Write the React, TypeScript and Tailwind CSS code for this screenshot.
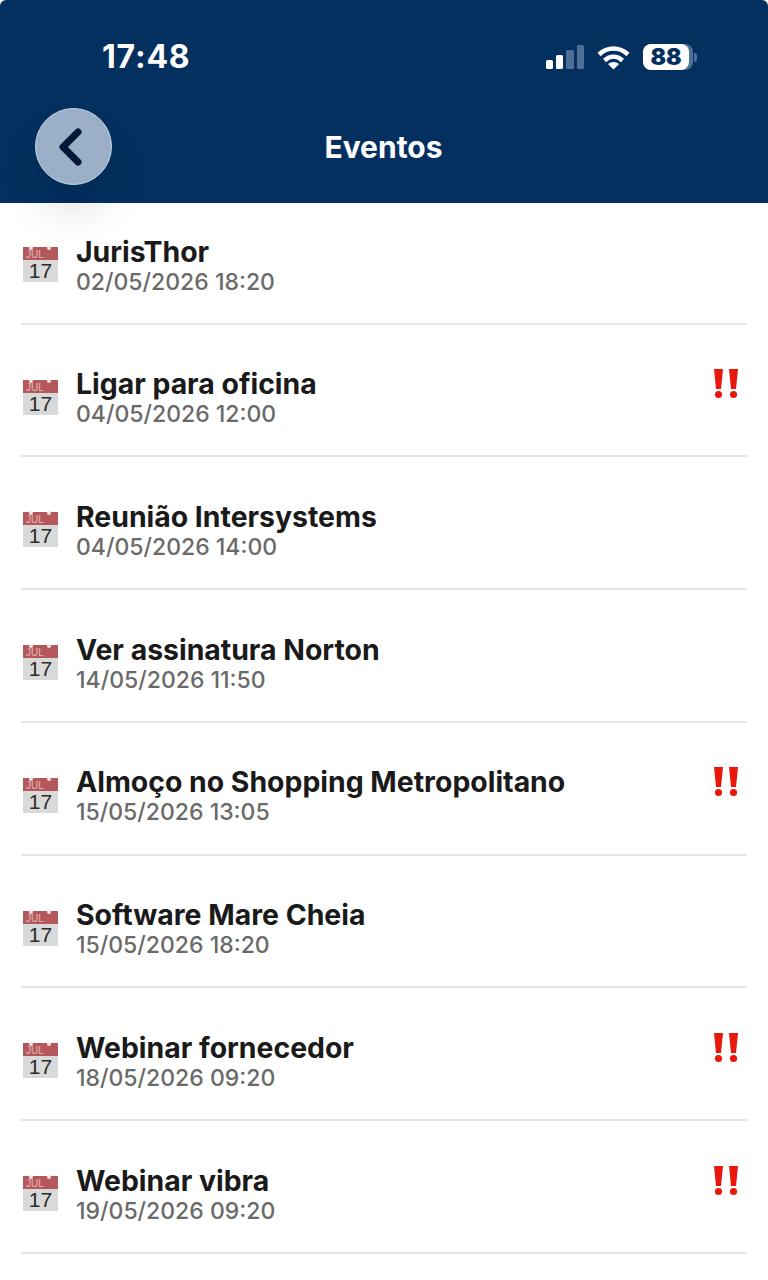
import React from "react"

const events = [
  { title: "JurisThor", date: "02/05/2026 18:20", urgent: false },
  { title: "Ligar para oficina", date: "04/05/2026 12:00", urgent: true },
  { title: "Reunião Intersystems", date: "04/05/2026 14:00", urgent: false },
  { title: "Ver assinatura Norton", date: "14/05/2026 11:50", urgent: false },
  { title: "Almoço no Shopping Metropolitano", date: "15/05/2026 13:05", urgent: true },
  { title: "Software Mare Cheia", date: "15/05/2026 18:20", urgent: false },
  { title: "Webinar fornecedor", date: "18/05/2026 09:20", urgent: true },
  { title: "Webinar vibra", date: "19/05/2026 09:20", urgent: true },
]

const CalendarIcon = () => (
  <div className="relative w-[35px] h-[35px] shrink-0 flex flex-col font-['Liberation_Sans',sans-serif]">
    <div className="h-[13px] bg-[#b4585c] text-[#e3b9ba] text-[10px] leading-[16px] pl-[3px] overflow-hidden">JUL</div>
    <div className="flex-1 bg-[#d9d9d9] text-[#2b2b2b] text-[21px] leading-[22px] text-center">17</div>
    <span className="absolute left-[6px] -top-[1px] w-[4px] h-[4px] rounded-full bg-[#f3e4e4]"></span>
    <span className="absolute right-[7px] -top-[1px] w-[4px] h-[4px] rounded-full bg-[#f3e4e4]"></span>
  </div>
)

const UrgentIcon = () => (
  <svg width="26" height="30" viewBox="0 0 26 30" className="shrink-0 mt-[1px]" fill="#e8190c">
    <path d="M1 0h9l-2 20H3z" />
    <circle cx="5.500" cy="25.500" r="3.600" />
    <path d="M16 0h9l-2 20h-5z" />
    <circle cx="20.500" cy="25.500" r="3.600" />
  </svg>
)

const StatusIcons = () => (
  <div className="flex items-center gap-[13px]">
    <svg width="38" height="24" viewBox="0 0 38 24">
      <rect x="0" y="15" width="7" height="9" rx="1.500" fill="#fff" />
      <rect x="10" y="10" width="7" height="14" rx="1.500" fill="#fff" />
      <rect x="20" y="5" width="8" height="19" rx="1.500" fill="#4f7096" />
      <rect x="31" y="0" width="7" height="24" rx="1.500" fill="#4f7096" />
    </svg>
    <svg width="33" height="25" viewBox="0 0 33 25" fill="none" stroke="#fff" strokeWidth="4.500">
      <path d="M2 9.500C10.500 1.500 22.500 1.500 31 9.500" />
      <path d="M7.500 15.500C13 10.500 20 10.500 25.500 15.500" />
      <path d="M16.500 24.500l-5.500-5.500c3-2.700 8-2.700 11 0z" fill="#fff" stroke="none" />
    </svg>
    <div className="flex items-center gap-[1px]">
      <div className="w-[50px] h-[26px] rounded-[8px] bg-[#4f7096]">
        <div className="w-[46px] h-full bg-white rounded-[8px] text-[#03305f] text-[23px] leading-[26px] font-black text-center font-['Inter',sans-serif]">
          88
        </div>
      </div>
      <div className="w-[3px] h-[9px] rounded-r-full bg-[#4f7096]"></div>
    </div>
  </div>
)

const App: React.FC = () => {
  return (
    <div className="w-[768px] h-[1280px] bg-white overflow-hidden font-['Inter',sans-serif]">
      <header className="relative z-10 h-[203px] bg-[#03305f] rounded-t-[6px] text-white">
        <div className="h-[108px] pt-[41px] pl-[102px] pr-[71px] flex items-start justify-between">
          <span className="text-[32px] leading-[32px] font-bold tracking-[0.8px]">17:48</span>
          <div className="pt-[3px]">
            <StatusIcons />
          </div>
        </div>
        <div className="grid grid-cols-[1fr_auto_1fr] items-center pl-[35px]">
          <button className="w-[77px] h-[77px] rounded-full bg-[#9bafc6] border border-[#c4d8ee] flex items-center justify-center shadow-[0_28px_40px_rgba(0,0,0,0.11)]">
            <svg width="26" height="38" viewBox="0 0 26 38" fill="none" stroke="#03193a" strokeWidth="7" strokeLinecap="round" strokeLinejoin="round" className="-ml-[5px]">
              <path d="M20 4L5 19l15 15" />
            </svg>
          </button>
          <h1 className="text-[30px] leading-[38px] font-bold -ml-[36px]">Eventos</h1>
          <div></div>
        </div>
      </header>

      <ul className="mx-[21px]">
        {events.map((event, index) => (
          <li
            key={index}
            className={`flex border-b-2 border-[#e6e6e6] pr-[8px] ${index === 0 ? "h-[121.500px] pt-[32.500px]" : "h-[132.800px] pt-[43.500px]"}`}
          >
            <div className="pt-[11.500px] pl-[2px]">
              <CalendarIcon />
            </div>
            <div className="flex-1 pl-[18px]">
              <div className="text-[28.400px] leading-[32px] font-bold text-[#1a1a1a]">{event.title}</div>
              <div className="text-[23px] leading-[28px] font-medium text-[#6a6a6a]">{event.date}</div>
            </div>
            {event.urgent && <UrgentIcon />}
          </li>
        ))}
      </ul>
    </div>
  )
}

export default App
